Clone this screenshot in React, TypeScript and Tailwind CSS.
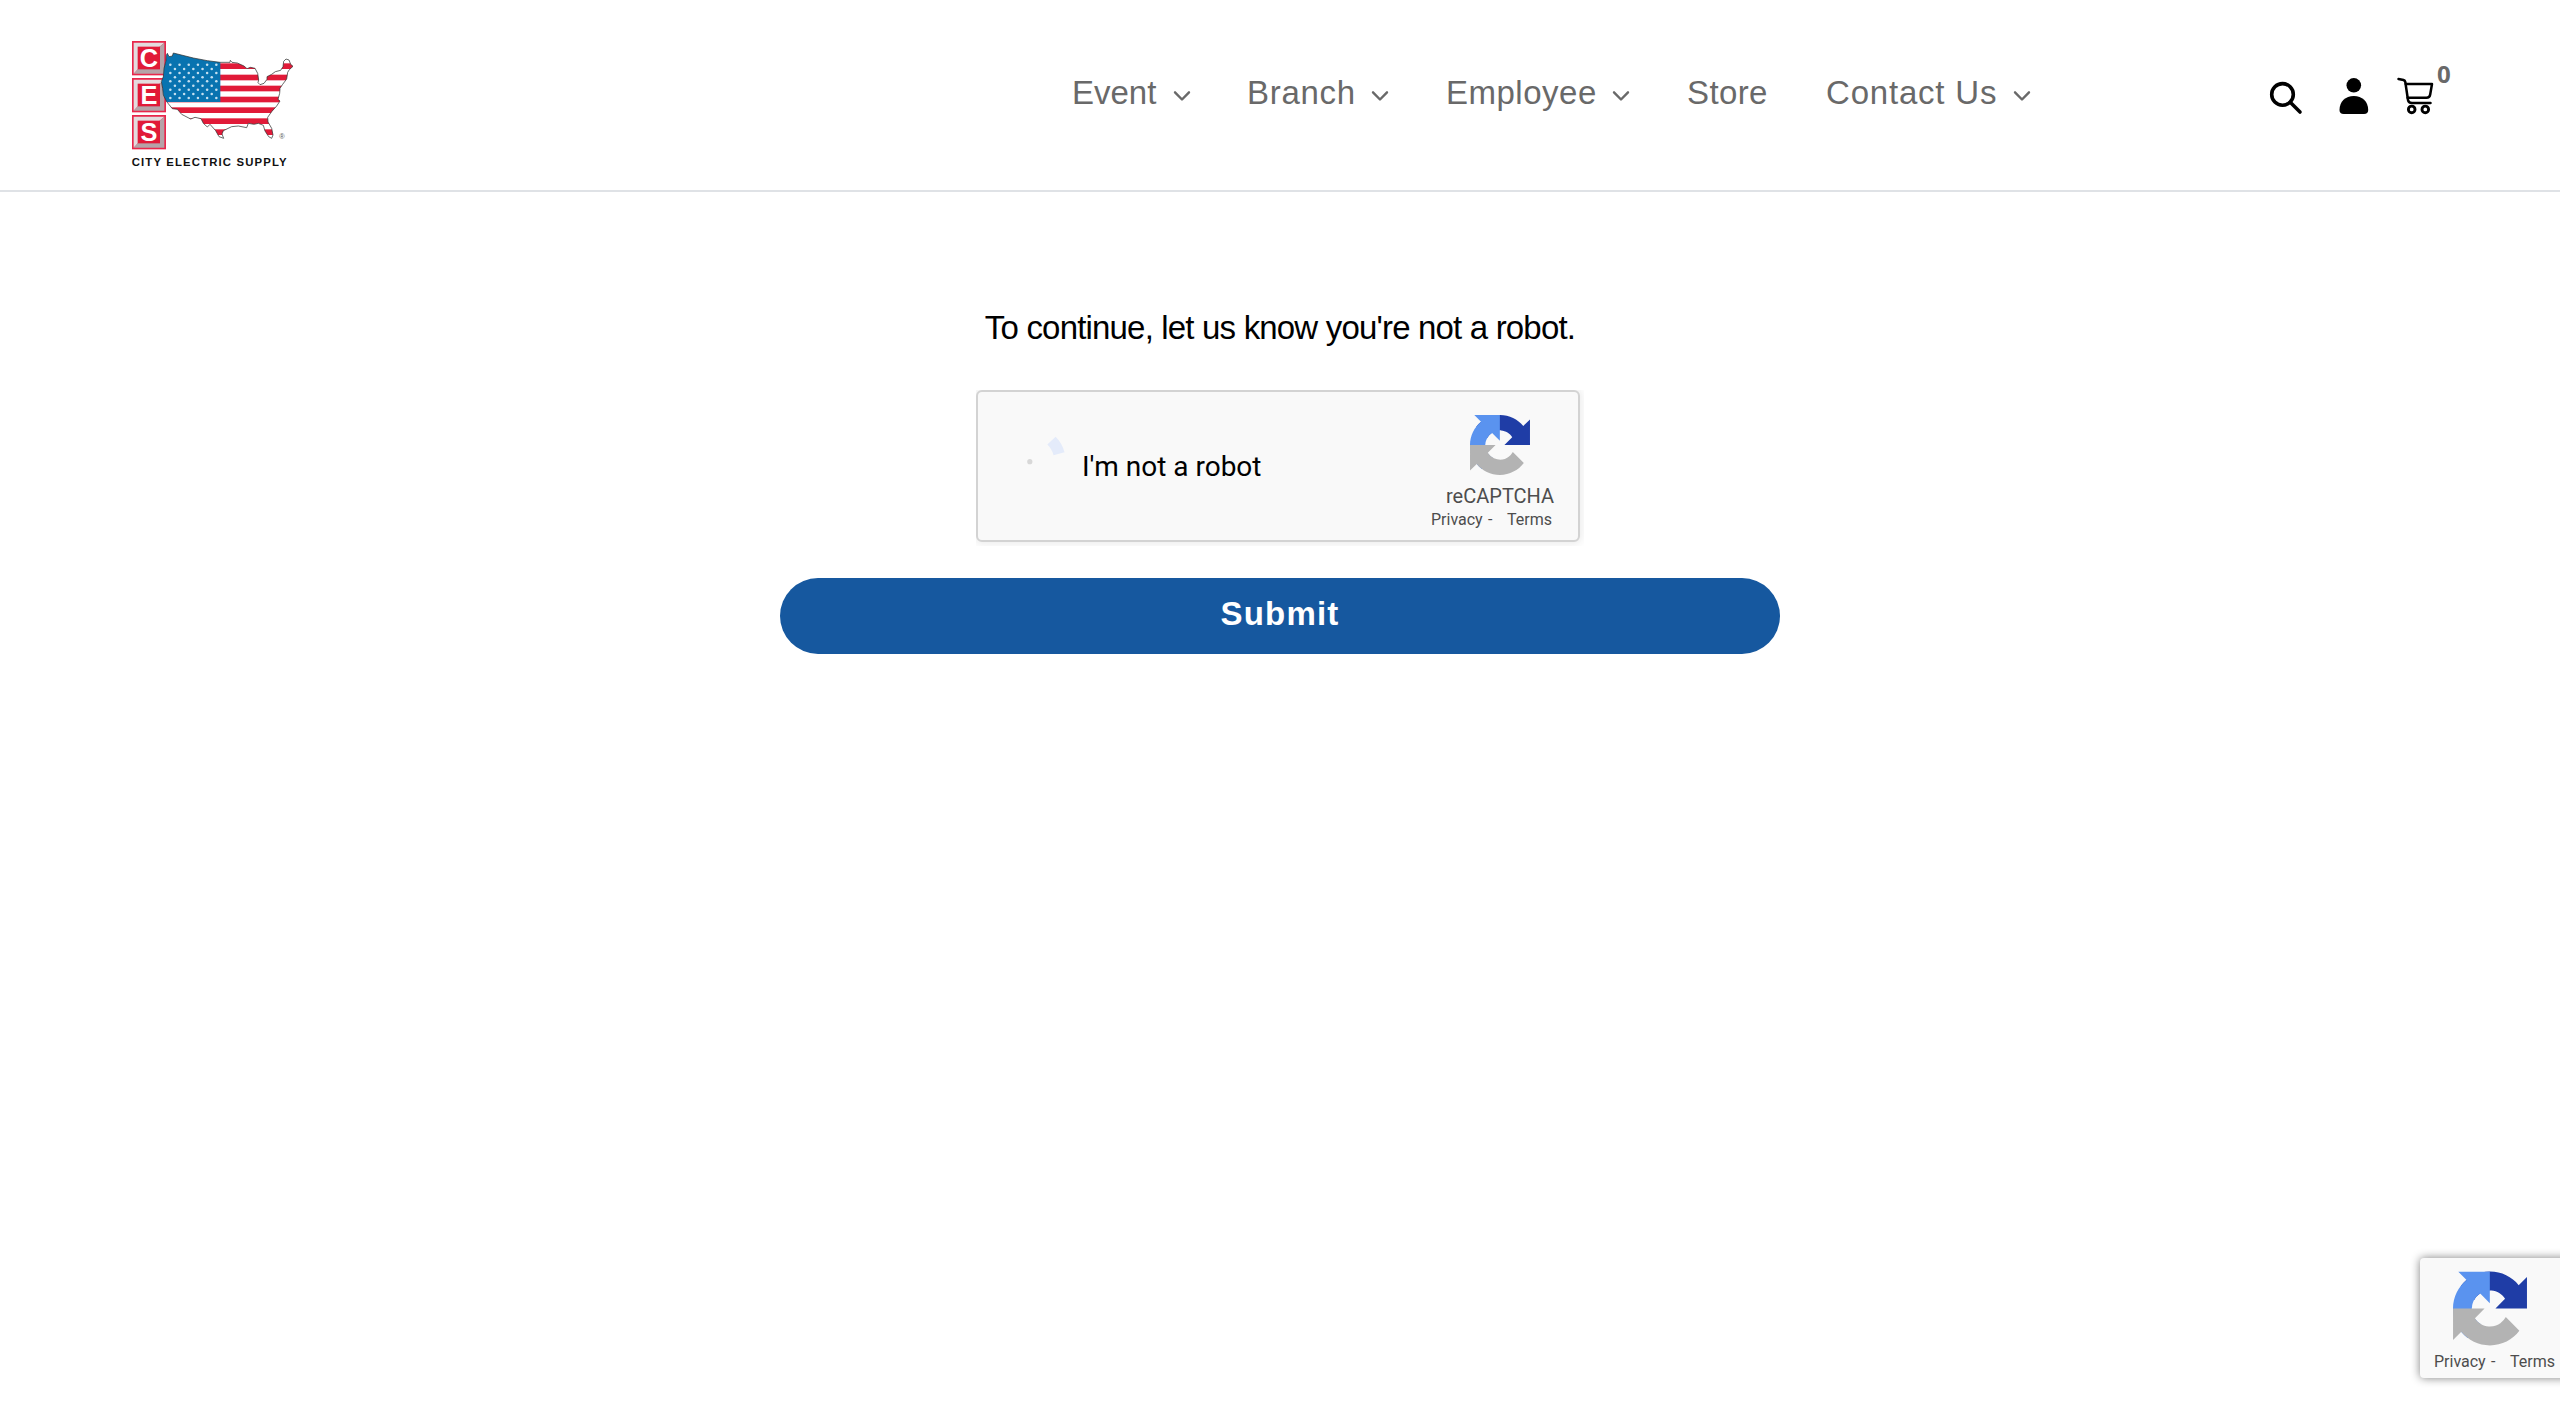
const STAR_ROWS = [104, 117, 129, 142, 154, 167, 179, 192, 204];
const STRIPES = [100, 134, 167, 200, 232, 265, 298];
const MAP =
  "M142 70L147 80L157 78L160 69L220 84L262 92L300 97L330 97L331 91L336 97L352 99L372 108L381 116L391 112L405 115L413 130L416 150L414 158L420 164L432 160L441 148L441 140L455 133L466 125L482 121L489 110L491 94L498 87L507 90L512 103L519 109L508 119L503 127L500 147L488 163L480 175L479 190L474 208L480 213L470 228L455 245L443 262L444 276L455 295L459 315L455 325L446 320L435 303L430 286L415 280L402 283L385 280L380 293L355 288L335 290L310 302L306 312L311 325L297 320L287 302L270 283L262 291L250 280L243 266L225 262L212 267L185 253L172 238L157 236L140 215L130 195L128 175L124 155L130 140L132 115L138 92L139 76Z";

function Tile({ y, letter }: { y: number; letter: string }) {
  return (
    <g transform={`translate(36 ${y})`}>
      <rect width="102" height="103" fill="#e8274b" />
      <path d="M5 5H97L82 18H18V84L5 98Z" fill="#e3dcde" />
      <path d="M97 5V98H5L18 84H82V18Z" fill="#b5a3a8" />
      <rect x="17" y="17" width="67" height="68" fill="#e11a38" />
      <text x="50.5" y="78" textAnchor="middle" fontSize="76" fontWeight="700" fill="#fff" fontFamily="Liberation Sans, sans-serif">
        {letter}
      </text>
    </g>
  );
}

function Logo() {
  return (
    <svg className="block h-[150px] w-[190px]" viewBox="0 0 570 450">
      <Tile y={33} letter="C" />
      <Tile y={144} letter="E" />
      <Tile y={255} letter="S" />
      <clipPath id="country">
        <path d={MAP} />
      </clipPath>
      <g clipPath="url(#country)">
        <rect x="120" y="60" width="410" height="280" fill="#fff" />
        {STRIPES.map((y) => (
          <rect key={y} x="120" y={y} width="410" height="17" fill="#e11a38" />
        ))}
        <rect x="120" y="60" width="181" height="156" fill="#0873b0" />
        {STAR_ROWS.map((y, r) =>
          Array.from({ length: r % 2 ? 5 : 6 }, (_, i) => (
            <circle key={`${y}-${i}`} cx={151 + (r % 2 ? 13.8 : 0) + i * 27.6} cy={y} r="3.8" fill="#c5e0f0" />
          )),
        )}
      </g>
      <path d={MAP} fill="none" stroke="#333" strokeWidth="2.2" strokeLinejoin="round" />
      <text x="478" y="326" fontSize="22" fill="#555" fontFamily="Liberation Sans, sans-serif">®</text>
      <text x="35" y="407" fontSize="34" fontWeight="700" fill="#111" textLength="465" fontFamily="Liberation Sans, sans-serif">
        CITY ELECTRIC SUPPLY
      </text>
    </svg>
  );
}

function Chevron() {
  return (
    <svg className="mt-[5px] h-3 w-[18px]" viewBox="0 0 18 12" fill="none" stroke="#696969" strokeWidth="2.4" strokeLinecap="round" strokeLinejoin="round">
      <path d="M2 2.3L9 9.5L16 2.3" />
    </svg>
  );
}

function NavItem({ label, className, menu = true }: { label: string; className: string; menu?: boolean }) {
  return (
    <a className={`flex shrink-0 items-center justify-between whitespace-nowrap ${className}`}>
      <span>{label}</span>
      {menu && <Chevron />}
    </a>
  );
}

function RecaptchaMark({ className }: { className: string }) {
  return (
    <svg className={className} viewBox="0 0 64 64">
      <path fill="#1f3da6" d="M64 31.955l-.033-1.37V4.687l-7.16 7.16C50.948 4.674 42.033.093 32.05.093c-10.4 0-19.622 4.96-25.458 12.64l11.736 11.86a15.55 15.55 0 0 1 4.754-5.334c2.05-1.6 4.952-2.906 8.968-2.906.485 0 .86.057 1.135.163 4.976.393 9.288 3.14 11.828 7.124l-8.307 8.307L64 31.953" />
      <path fill="#5a93ef" d="M31.862.094l-1.37.033H4.594l7.16 7.16C4.58 13.147 0 22.06 0 32.046c0 10.4 4.96 19.622 12.64 25.458L24.5 45.768a15.55 15.55 0 0 1-5.334-4.754c-1.6-2.05-2.906-4.952-2.906-8.968 0-.485.057-.86.163-1.135.393-4.976 3.14-9.288 7.124-11.828l8.307 8.307L31.86.095" />
      <path fill="#b3b3b3" d="M.001 32.045l.033 1.37v25.898l7.16-7.16c5.86 7.173 14.774 11.754 24.76 11.754 10.4 0 19.622-4.96 25.458-12.64l-11.736-11.86a15.55 15.55 0 0 1-4.754 5.334c-2.05 1.6-4.952 2.906-8.968 2.906-.485 0-.86-.057-1.135-.163-4.976-.393-9.288-3.14-11.828-7.124l8.307-8.307c-10.522.04-22.4.066-27.295-.005" />
    </svg>
  );
}

function Policies({ className }: { className: string }) {
  return (
    <div className={`flex whitespace-nowrap text-[16px] leading-5 text-[#4d4d4d] ${className}`}>
      <span className="w-[57px]">Privacy</span>
      <span className="w-[19px]">-</span>
      <span>Terms</span>
    </div>
  );
}

export default function App() {
  return (
    <div className="relative h-[1406px] w-[2560px] overflow-hidden bg-white font-['Liberation_Sans',Arial,sans-serif]">
      <header className="flex h-[192px] items-start border-b-2 border-[#dfe2e6] pl-[120px]">
        <div className="w-[952px] shrink-0 pt-[30px]">
          <Logo />
        </div>
        <nav className="flex w-[1196px] shrink-0 pt-[74px] text-[33px] leading-[38px] text-[#696969]">
          <NavItem label="Event" className="mr-[56px] w-[119px] tracking-[0px]" />
          <NavItem label="Branch" className="mr-[57px] w-[142px] tracking-[0.7px]" />
          <NavItem label="Employee" className="mr-[57px] w-[184px] tracking-[0.5px]" />
          <NavItem label="Store" menu={false} className="mr-[57px] w-[82px] tracking-[0.4px]" />
          <NavItem label="Contact Us" className="w-[205px] tracking-[0.8px]" />
        </nav>
        <div className="flex shrink-0 pt-[60px]">
          <svg className="mt-[20px] h-[36px] w-[36px]" viewBox="0 0 36 36" fill="none" stroke="#000">
            <circle cx="14.5" cy="14.4" r="10.8" strokeWidth="3.6" />
            <path d="M22.5 22.5L32 32" strokeWidth="3.6" strokeLinecap="round" />
          </svg>
          <svg className="ml-[34px] mt-[16px] h-[40px] w-[32px]" viewBox="0 0 32 40" fill="#000">
            <circle cx="15.8" cy="9.3" r="7.3" />
            <path d="M1.5 34C1.5 25.5 7.5 20 15.8 20S30.2 25.5 30.2 34Q30.2 38 26 38H5.7Q1.5 38 1.5 34Z" />
          </svg>
          <svg className="ml-[25px] mt-[16px] mr-px h-[40px] w-[40px]" viewBox="0 0 40 40" fill="none" stroke="#000" strokeWidth="2.5" strokeLinecap="round" strokeLinejoin="round">
            <path d="M3.5 3L8.5 4Q10 4.5 10.3 6L13 24Q13.5 27 17 27H35.5" />
            <path d="M10.8 8H37L35.2 18.5Q34.6 21.8 31.5 21.8H12.6" />
            <circle cx="16.7" cy="33.4" r="3.3" strokeWidth="2.9" />
            <circle cx="30.3" cy="33.4" r="3.3" strokeWidth="2.9" />
          </svg>
          <span className="ml-px font-['Open_Sans',sans-serif] text-[24px] font-bold leading-[27px] text-[#696969]">0</span>
        </div>
      </header>

      <main className="flex flex-col items-center">
        <p className="mt-[117px] whitespace-nowrap text-[33px] leading-[38px] tracking-[-0.82px] text-black">
          To continue, let us know you're not a robot.
        </p>
        <div className="mt-[43px] h-[156px] w-[608px] overflow-hidden">
          <div className="flex h-[152px] w-[604px] rounded-[6px] border-2 border-[#d3d3d3] bg-[#f9f9f9] font-[Roboto,sans-serif] shadow-[0_0_8px_2px_rgba(0,0,0,0.08)]">
            <svg className="h-[148px] w-[104px] shrink-0" viewBox="0 0 104 148">
              <path d="M77.6 44.8Q84 51 86.5 60.3L75.6 63.2Q74 57 69.3 52.5Z" fill="#e4ebfa" />
              <circle cx="51.8" cy="69.7" r="2.6" fill="#d8d8d8" />
            </svg>
            <span className="w-[349px] shrink-0 pt-[58px] text-[28px] leading-[34px] text-black">I'm not a robot</span>
            <div className="flex flex-col items-start">
              <RecaptchaMark className="ml-[39px] mt-[23px] block h-[60px] w-[60px]" />
              <div className="ml-[15px] mt-[9px] text-[20px] leading-6 text-[#4d4d4d]">reCAPTCHA</div>
              <Policies className="mt-[2px]" />
            </div>
          </div>
        </div>
        <button className="mt-[32px] h-[76px] w-[1000px] rounded-full bg-[#16589f] pb-1 text-[33px] font-bold tracking-[1.2px] text-white">
          Submit
        </button>
      </main>

      <aside className="absolute left-[2420px] top-[1258px] flex h-[120px] w-[512px] flex-col items-start rounded-[4px] bg-[#f9f9f9] font-[Roboto,sans-serif] shadow-[0_0_10px_gray]">
        <RecaptchaMark className="ml-[33px] mt-[13px] block h-[75px] w-[74px]" />
        <Policies className="ml-[14px] mt-[6px]" />
      </aside>
    </div>
  );
}
